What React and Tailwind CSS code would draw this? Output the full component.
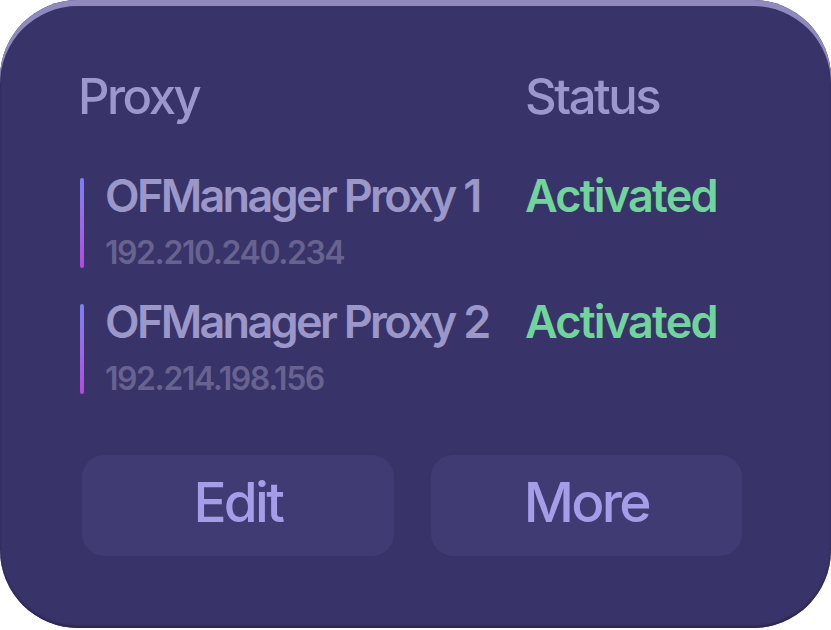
const proxies = [
  { name: "OFManager Proxy 1", ip: "192.210.240.234", status: "Activated" },
  { name: "OFManager Proxy 2", ip: "192.214.198.156", status: "Activated" },
];

const ProxyRow = ({ proxy }) => (
  <div className="grid grid-cols-[447px_1fr]">
    <div className="flex gap-[21px]">
      <div className="ml-[2px] mt-[8px] h-[90px] w-[4px] rounded-full bg-gradient-to-b from-[#7c80f2] to-[#b34ad9]" />
      <div className="flex flex-col">
        <span className="text-[45px] leading-[52px] font-semibold tracking-[-0.06em] text-[#9b97c9]">
          {proxy.name}
        </span>
        <span className="mt-[12px] text-[32px] leading-[38px] font-semibold tracking-[-0.045em] text-[#67628f]">
          {proxy.ip}
        </span>
      </div>
    </div>
    <span className="text-[45px] leading-[52px] font-semibold tracking-[-0.04em] text-[#6fd59b]">
      {proxy.status}
    </span>
  </div>
);

export default function App() {
  return (
    <div
      className="w-[831px] h-[630px] bg-white"
      style={{ fontFamily: "Inter, 'Noto Sans', sans-serif" }}
    >
      <div className="w-[831px] h-[628px] rounded-[78px] bg-[#383368] shadow-[inset_0_6px_0_#8f89bd,inset_0_-2px_2px_#2a2652] pl-[78px] pr-[89px] pt-[67px]">
        <div className="grid grid-cols-[447px_1fr] text-[49px] leading-[60px] font-medium tracking-[-0.05em] text-[#9c97cf]">
          <span>Proxy</span>
          <span>Status</span>
        </div>
        <div className="mt-[43px] flex flex-col gap-[24px]">
          {proxies.map((p) => (
            <ProxyRow key={p.name} proxy={p} />
          ))}
        </div>
        <div className="mt-[57px] ml-[4px] grid grid-cols-2 gap-[37px]">
          <button className="h-[101px] pb-[6px] rounded-[22px] bg-[#403b72] text-[55px] font-medium tracking-[-0.05em] text-[#a59de8]">
            Edit
          </button>
          <button className="h-[101px] pb-[6px] rounded-[22px] bg-[#403b72] text-[55px] font-medium tracking-[-0.05em] text-[#a59de8]">
            More
          </button>
        </div>
      </div>
    </div>
  );
}
